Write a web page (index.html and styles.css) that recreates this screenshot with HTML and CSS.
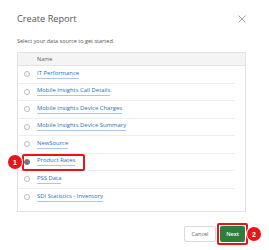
FILE: index.html
```html
<!DOCTYPE html>
<html>
<head>
<meta charset="utf-8">
<link rel="stylesheet" href="styles.css">
</head>
<body>
<div class="dialog">
  <div class="head">
    <h1 class="title">Create Report</h1>
    <svg class="close" width="8" height="8" viewBox="0 0 8 8"><path d="M0.5 0.5L7.5 7.5M7.5 0.5L0.5 7.5" stroke="#8a8a8a" stroke-width="0.8"/></svg>
  </div>
  <p class="sub">Select your data source to get started.</p>
  <div class="table">
    <div class="thead">Name</div>
    <div class="row"><span class="radio"></span><a class="link">IT Performance</a></div>
    <div class="row"><span class="radio"></span><a class="link">Mobile Insights Call Details</a></div>
    <div class="row"><span class="radio"></span><a class="link">Mobile Insights Device Charges</a></div>
    <div class="row"><span class="radio"></span><a class="link">Mobile Insights Device Summary</a></div>
    <div class="row"><span class="radio"></span><a class="link">NewSource</a></div>
    <div class="row selected"><span class="radio on"></span><a class="link">Product Rates</a><span class="hl"></span><span class="badge b1">1</span></div>
    <div class="row"><span class="radio"></span><a class="link">PSS Data</a></div>
    <div class="row last"><span class="radio"></span><a class="link">SDI Statistics - Inventory</a></div>
  </div>
  <div class="foot">
    <button class="btn cancel">Cancel</button>
    <div class="nextwrap">
      <button class="btn next">Next</button>
      <span class="badge b2">2</span>
    </div>
  </div>
</div>
</body>
</html>
```
FILE: styles.css
```css
html, body { margin: 0; padding: 0; background: #fff; }
body { font-family: "Open Sans", "Liberation Sans", sans-serif; color: #555; }
.dialog { width: 269px; height: 250px; padding: 0 23px 0 17px; box-sizing: border-box; }
.head { display: flex; justify-content: space-between; align-items: center; height: 38px; }
.title { margin: 0; font-size: 9.2px; font-weight: 400; color: #555; line-height: 1; }
.sub { margin: 0; font-size: 5.5px; color: #555; line-height: 7px; height: 14px; }
.table { border: 1px solid #e3e3e3; width: 229px; box-sizing: border-box; padding-bottom: 5px; }
.thead { height: 12px; background: #f4f4f4; border-bottom: 1px solid #e3e3e3; font-size: 5.5px; color: #666; padding-left: 19px; display: flex; align-items: center; }
.row { position: relative; height: 17.5px; display: flex; align-items: center; margin: 0 10px 0 0; border-bottom: 1px solid #eee; box-sizing: border-box; padding-left: 6px; }
.row.last { border-bottom: none; }
.radio { width: 4px; height: 4px; border: 0.6px solid #bbb; border-radius: 50%; margin-right: 7px; flex: none; }
.radio.on { background: #777; border-color: #777; }
.link { font-size: 5.9px; color: #2b6fb8; border-bottom: 1px solid #a9c8e8; line-height: 7px; padding-bottom: 1px; }
.hl { position: absolute; left: 4px; top: 0; width: 63px; height: 17px; border: 2px solid #e8141a; border-radius: 2px; box-sizing: border-box; }
.badge { position: absolute; width: 14px; height: 14px; border-radius: 50%; background: #e8141a; color: #fff; font-size: 7px; font-weight: 700; display: flex; align-items: center; justify-content: center; font-family: "Liberation Sans", sans-serif; box-shadow: 0 0 0 1px #fff; }
.b1 { left: -10px; top: 1.5px; }
.foot { display: flex; justify-content: flex-end; align-items: center; margin-top: 11px; gap: 1px; margin-right: -2px; }
.btn { font-family: "Open Sans", "Liberation Sans", sans-serif; font-size: 5.5px; height: 16px; border-radius: 2px; padding: 0; }
.cancel { width: 32px; background: #fff; border: 1px solid #d9d9d9; color: #666; }
.nextwrap { position: relative; padding: 1px; border: 2px solid #e8141a; border-radius: 2px; display: flex; }
.next { width: 25px; background: #2f7d3b; border: none; color: #fff; font-weight: 600; }
.b2 { left: 28px; top: 2px; }
```
